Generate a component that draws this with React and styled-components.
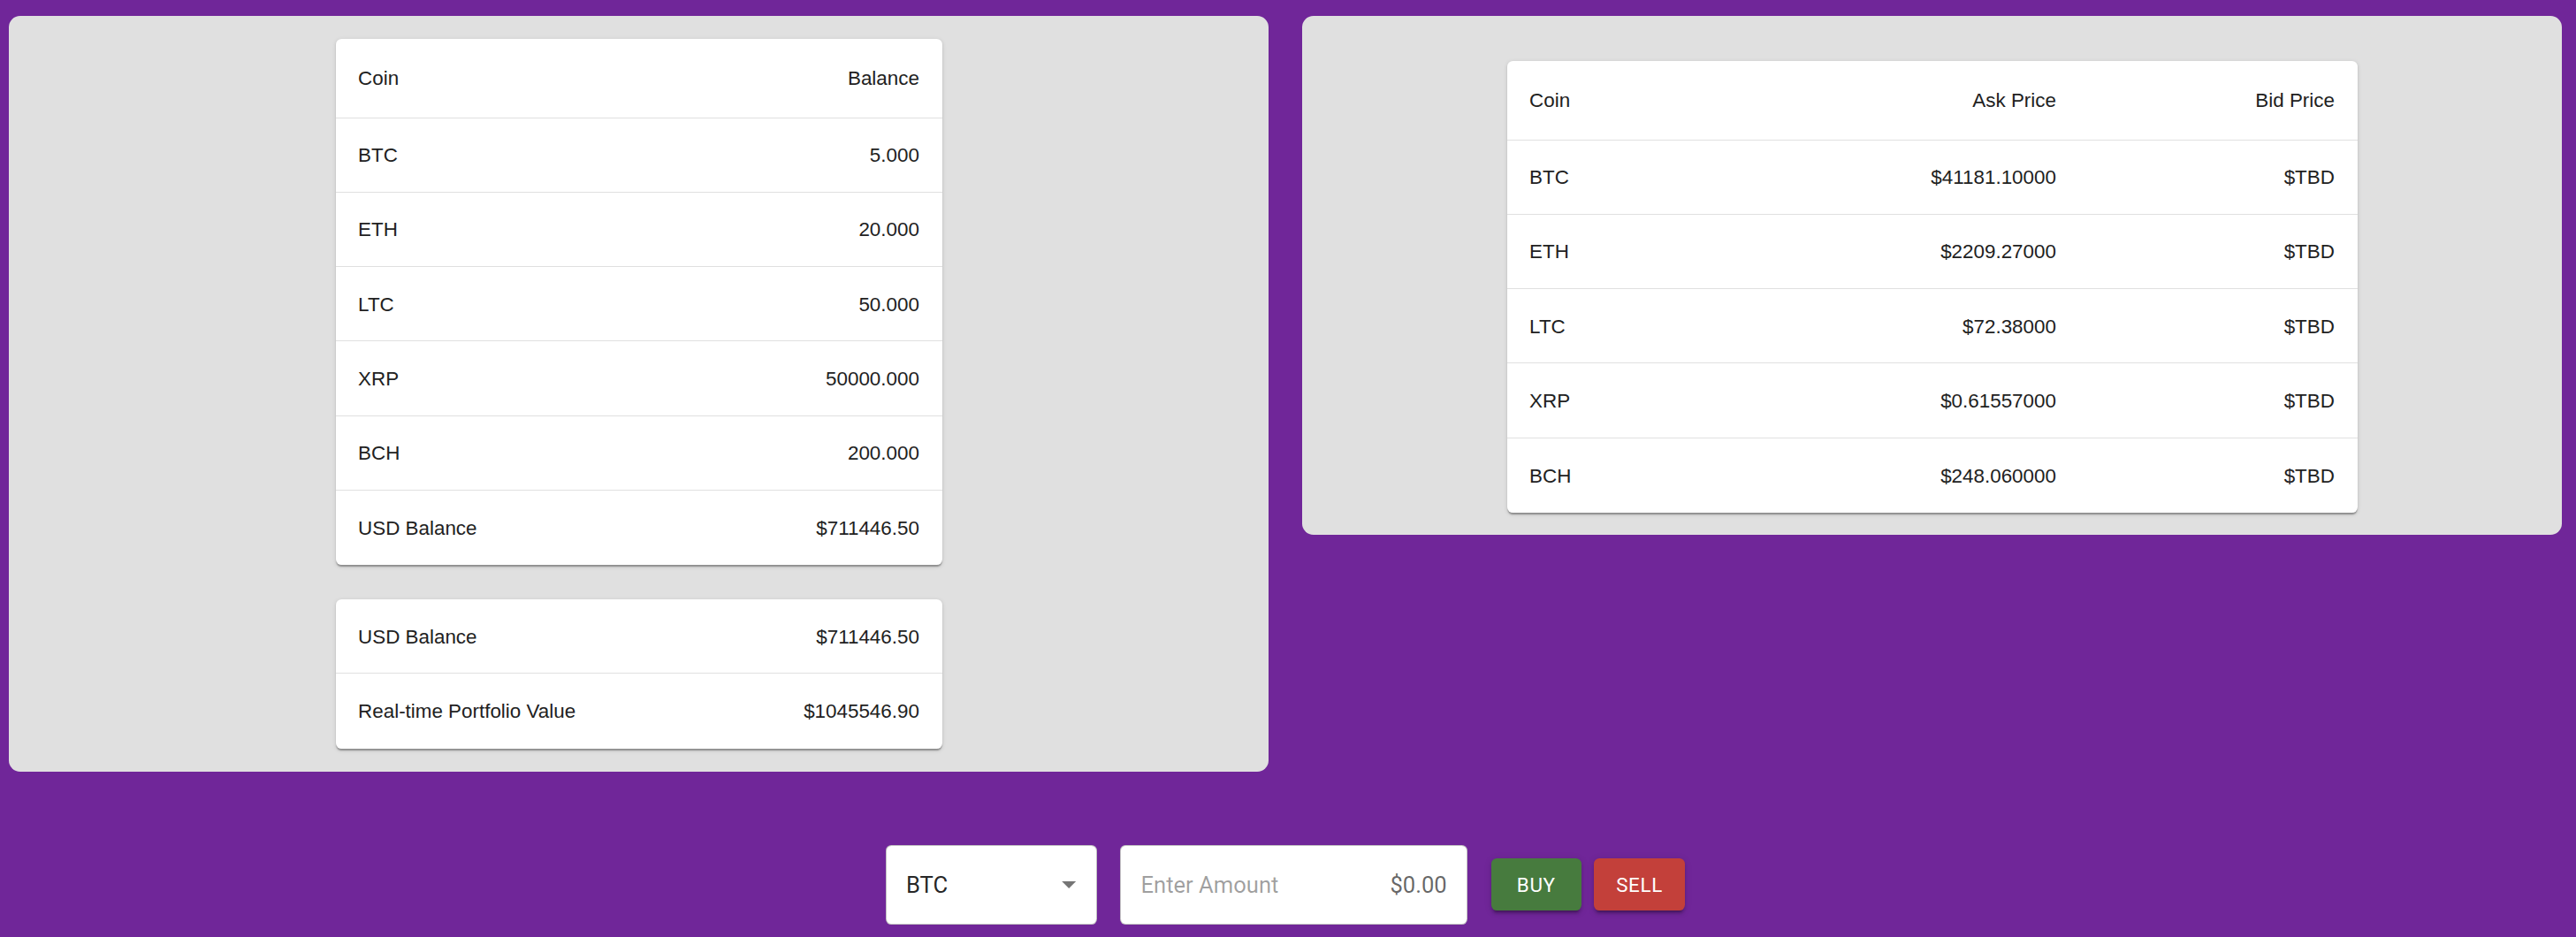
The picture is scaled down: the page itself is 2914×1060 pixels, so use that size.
import React from "react";
import styled, { createGlobalStyle } from "styled-components";

const Global = createGlobalStyle`
  html, body {
    margin: 0;
    padding: 0;
    background: #702699;
  }
  body {
    font-family: "Liberation Sans", Arial, sans-serif;
    color: rgba(0, 0, 0, 0.87);
  }
  * { box-sizing: border-box; }
`;

const Page = styled.div`
  padding: 18px 16px 15px 10px;
  min-height: 1060px;
  background: #702699;
`;

const PanelRow = styled.div`
  display: flex;
  gap: 38px;
  align-items: flex-start;
`;

const Panel = styled.section`
  flex: 1 1 0;
  background: #e0e0e0;
  border-radius: 12.8px;
  display: flex;
  flex-direction: column;
  align-items: center;
  gap: 38.7px;
  padding: ${(p) => p.$padTop}px 0 ${(p) => p.$padBottom}px;
`;

const Card = styled.div`
  width: ${(p) => p.$width}px;
  background: #ffffff;
  border-radius: 6.4px;
  overflow: hidden;
  box-shadow: 0px 3.2px 1.6px -1.6px rgba(0, 0, 0, 0.2),
    0px 1.6px 1.6px 0px rgba(0, 0, 0, 0.14),
    0px 1.6px 4.8px 0px rgba(0, 0, 0, 0.12);
`;

const Row = styled.div`
  display: grid;
  grid-template-columns: ${(p) => p.$cols};
  align-items: center;
  height: ${(p) => (p.$head ? 89.5 : 84.3)}px;
  border-bottom: 1px solid #e0e0e0;
  font-size: 22.4px;
  line-height: 1.43;
  color: #212121;
  &:last-child {
    border-bottom: 0;
  }
`;

const Cell = styled.div`
  padding: 2px 25.6px 0;
  text-align: ${(p) => (p.$right ? "right" : "left")};
  white-space: nowrap;
`;

const Controls = styled.div`
  margin-top: 83px;
  display: flex;
  justify-content: center;
  align-items: center;
  gap: 26.5px;
  font-family: Roboto, "Liberation Sans", Arial, sans-serif;
`;

const Field = styled.div`
  width: ${(p) => p.$width}px;
  height: 90px;
  background: #ffffff;
  border: 1px solid rgba(0, 0, 0, 0.23);
  border-radius: 6.4px;
  display: flex;
  align-items: center;
  justify-content: space-between;
  padding: 0 22.4px;
  font-size: 25.6px;
  color: rgba(0, 0, 0, 0.87);
`;

const SelectField = styled(Field)`
  padding-right: 11px;
`;

const Placeholder = styled.span`
  color: rgba(0, 0, 0, 0.38);
`;

const Adornment = styled.span`
  color: rgba(0, 0, 0, 0.6);
`;

const ArrowIcon = styled.svg`
  width: 38.4px;
  height: 38.4px;
  fill: rgba(0, 0, 0, 0.54);
`;

const Buttons = styled.div`
  display: flex;
  gap: 13.6px;
`;

const ActionButton = styled.button`
  min-width: 102.4px;
  height: 58.4px;
  padding: 0 25.6px;
  border: 0;
  border-radius: 6.4px;
  background: ${(p) => p.$bg};
  color: #ffffff;
  font-family: Roboto, "Liberation Sans", Arial, sans-serif;
  font-size: 22.4px;
  font-weight: 400;
  letter-spacing: 0.64px;
  text-transform: uppercase;
  box-shadow: 0px 4.8px 1.6px -3.2px rgba(0, 0, 0, 0.2),
    0px 3.2px 3.2px 0px rgba(0, 0, 0, 0.14),
    0px 1.6px 8px 0px rgba(0, 0, 0, 0.12);
  cursor: pointer;
`;

const balances = [
  ["BTC", "5.000"],
  ["ETH", "20.000"],
  ["LTC", "50.000"],
  ["XRP", "50000.000"],
  ["BCH", "200.000"],
  ["USD Balance", "$711446.50"],
];

const prices = [
  ["BTC", "$41181.10000", "$TBD"],
  ["ETH", "$2209.27000", "$TBD"],
  ["LTC", "$72.38000", "$TBD"],
  ["XRP", "$0.61557000", "$TBD"],
  ["BCH", "$248.060000", "$TBD"],
];

const TWO = "1fr 1fr";
const THREE = "230px 1fr 315px";

export default function App() {
  return (
    <>
      <Global />
      <Page>
        <PanelRow>
          <Panel $padTop={26} $padBottom={26}>
            <Card $width={686}>
              <Row $head $cols={TWO}>
                <Cell>Coin</Cell>
                <Cell $right>Balance</Cell>
              </Row>
              {balances.map(([c, v]) => (
                <Row key={c} $cols={TWO}>
                  <Cell>{c}</Cell>
                  <Cell $right>{v}</Cell>
                </Row>
              ))}
            </Card>
            <Card $width={686}>
              <Row $cols={TWO}>
                <Cell>USD Balance</Cell>
                <Cell $right>$711446.50</Cell>
              </Row>
              <Row $cols={TWO}>
                <Cell>Real-time Portfolio Value</Cell>
                <Cell $right>$1045546.90</Cell>
              </Row>
            </Card>
          </Panel>
          <Panel $padTop={51} $padBottom={25}>
            <Card $width={962}>
              <Row $head $cols={THREE}>
                <Cell>Coin</Cell>
                <Cell $right>Ask Price</Cell>
                <Cell $right>Bid Price</Cell>
              </Row>
              {prices.map(([c, a, b]) => (
                <Row key={c} $cols={THREE}>
                  <Cell>{c}</Cell>
                  <Cell $right>{a}</Cell>
                  <Cell $right>{b}</Cell>
                </Row>
              ))}
            </Card>
          </Panel>
        </PanelRow>
        <Controls>
          <SelectField $width={239}>
            <span>BTC</span>
            <ArrowIcon viewBox="0 0 24 24" aria-hidden="true">
              <path d="M7 10l5 5 5-5z" />
            </ArrowIcon>
          </SelectField>
          <Field $width={393}>
            <Placeholder>Enter Amount</Placeholder>
            <Adornment>$0.00</Adornment>
          </Field>
          <Buttons>
            <ActionButton $bg="#477b3e">Buy</ActionButton>
            <ActionButton $bg="#c3403a">Sell</ActionButton>
          </Buttons>
        </Controls>
      </Page>
    </>
  );
}
